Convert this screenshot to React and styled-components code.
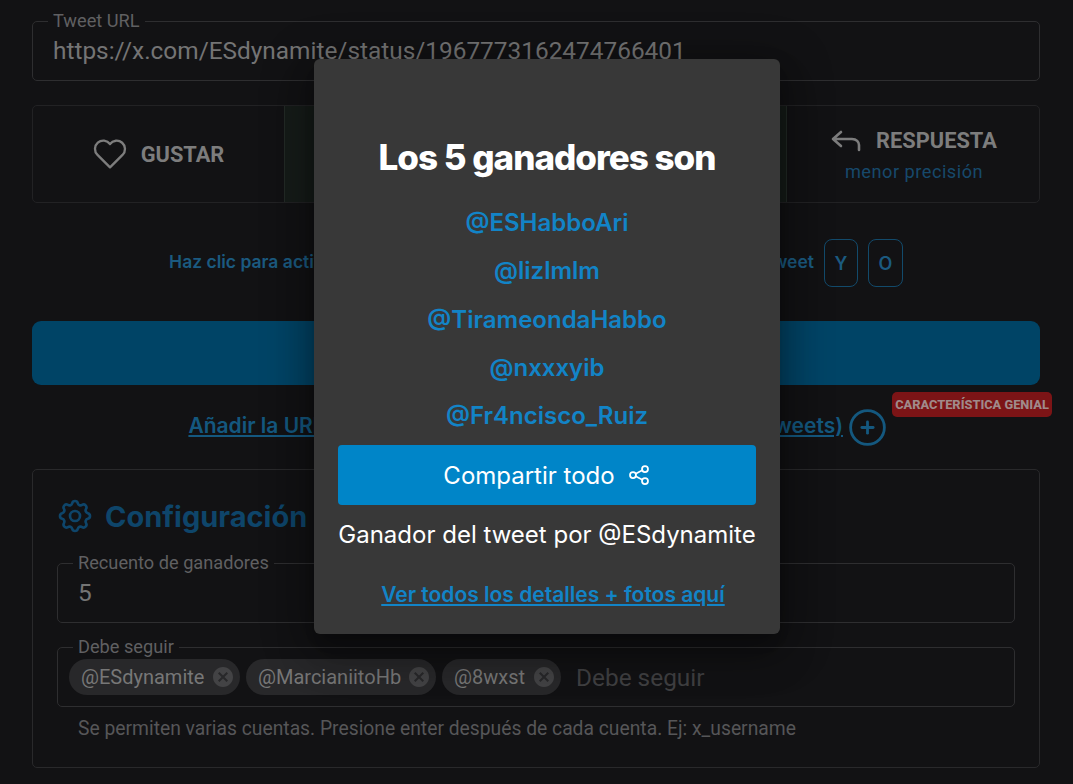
import React from 'react';
import styled, { createGlobalStyle } from 'styled-components';
import { TbHeart, TbSettings, TbCirclePlus, TbShare } from 'react-icons/tb';

const GlobalStyle = createGlobalStyle`
	html, body {
		margin: 0;
		height: 100%;
		background: #121214;
		overflow: hidden;
	}
	* {
		box-sizing: border-box;
	}
`;

const Page = styled.div`
	position: relative;
	width: 1073px;
	height: 784px;
	overflow: hidden;
	padding: 12px 33px 0 32px;
	font-family: Roboto, sans-serif;
	background: #121214;
`;

const Field = styled.fieldset`
	margin: 0;
	padding: 0 20px;
	height: 69px;
	border: 1px solid #2e2e30;
	border-radius: 5px;
`;

const Legend = styled.legend`
	padding: 0 5px;
	margin-left: -5px;
	font-size: 18.2px;
	line-height: 18px;
	color: #606062;
`;

const FieldValue = styled.div`
	font-size: 24.4px;
	line-height: 36px;
	margin-top: 3px;
	color: #747474;
`;

const Tabs = styled.div`
	display: flex;
	height: 98px;
	margin-top: 24px;
	border: 1px solid #222224;
	border-radius: 5px;
`;

const Tab = styled.div`
	display: flex;
	flex-direction: column;
	align-items: center;
	justify-content: center;
	width: ${(p) => p.$width}px;
	flex: ${(p) => (p.$grow ? 1 : 'none')};
	padding: ${(p) => p.$pad || '0'};
	background: ${(p) => (p.$active ? '#161c19' : 'transparent')};
	border-left: ${(p) => (p.$active ? '1px solid #232b26' : 'none')};
	border-right: ${(p) => (p.$active ? '1px solid #232b26' : 'none')};
`;

const TabLabel = styled.div`
	display: flex;
	align-items: center;
	gap: ${(p) => p.$gap}px;
	font-size: 21.8px;
	font-weight: 700;
	color: #7d7d7d;
	svg {
		color: #7d7d7d;
	}
`;

const TabNote = styled.div`
	margin-top: 8px;
	font-size: 18.2px;
	letter-spacing: 0.5px;
	color: #17496b;
`;

const HintRow = styled.div`
	display: flex;
	align-items: center;
	justify-content: flex-end;
	gap: 10px;
	height: 48px;
	margin-top: 36px;
	padding-right: 137px;
	font-family: Inter, sans-serif;
	font-size: 17.5px;
	font-weight: 600;
	color: #1b5a80;
	white-space: nowrap;
`;

const HintText = styled.span`
	margin-bottom: 3px;
`;

const Key = styled.span`
	display: flex;
	align-items: center;
	justify-content: center;
	width: ${(p) => p.$width}px;
	height: 48px;
	border: 1px solid #124a6b;
	border-radius: 8px;
	font-size: 18px;
	background: #121214;
`;

const PickButton = styled.div`
	height: 64px;
	margin-top: 34px;
	border-radius: 9px;
	background: #004466;
`;

const AddRow = styled.div`
	position: relative;
	display: flex;
	align-items: center;
	justify-content: flex-end;
	gap: 2px;
	height: 38px;
	margin-top: 23px;
	padding-right: 150px;
	font-family: Inter, sans-serif;
	font-size: 21px;
	font-weight: 600;
	color: #14587f;
	white-space: nowrap;
	svg {
		color: #14587f;
		flex: none;
	}
`;

const AddLink = styled.span`
	margin-bottom: 4px;
	text-decoration: underline;
`;

const Badge = styled.span`
	position: absolute;
	left: 860px;
	top: -16px;
	width: 160px;
	height: 25px;
	display: flex;
	align-items: center;
	justify-content: center;
	border-radius: 5px;
	background: #7c1416;
	font-family: Roboto, sans-serif;
	font-size: 12.8px;
	font-weight: 800;
	color: #a08a8a;
`;

const SettingsCard = styled.section`
	height: 299px;
	margin-top: 23px;
	padding: 24px 24px 0;
	border: 1px solid #29292b;
	border-radius: 5px;
`;

const CardTitle = styled.h2`
	display: flex;
	align-items: center;
	gap: 10px;
	margin: 0 0 16px;
	height: 44px;
	font-family: Inter, sans-serif;
	font-size: 29px;
	font-weight: 700;
	color: #0e456a;
	svg {
		margin-left: -2px;
		color: #0e456a;
	}
`;

const SettingField = styled(Field)`
	margin-bottom: 15px;
`;

const ChipRow = styled.div`
	display: flex;
	align-items: center;
	gap: 6px;
	margin: 3px 0 0 -9px;
`;

const Chip = styled.span`
	display: flex;
	align-items: center;
	justify-content: space-between;
	height: 36px;
	width: ${(p) => p.$width}px;
	padding: 0 5px 0 12px;
	border-radius: 18px;
	background: #28282a;
	font-size: 20px;
	color: #777;
`;

const ChipClose = styled.svg`
	width: 24px;
	height: 24px;
	fill: #434345;
`;

const Placeholder = styled.span`
	margin-left: 9px;
	font-size: 24.4px;
	color: #404042;
`;

const HelpText = styled.p`
	margin: -5px 0 0 21px;
	font-size: 19.3px;
	color: #565658;
`;

const Modal = styled.div`
	position: absolute;
	left: 314px;
	top: 59px;
	width: 466px;
	height: 575px;
	padding: 70px 24px 0;
	display: flex;
	flex-direction: column;
	align-items: center;
	border-radius: 6px;
	background: #383838;
	box-shadow: 0 11px 15px -7px rgba(0, 0, 0, 0.2), 0 24px 38px 3px rgba(0, 0, 0, 0.14), 0 9px 46px 8px rgba(0, 0, 0, 0.3);
	font-family: Inter, sans-serif;
	color: #fff;
`;

const ModalTitle = styled.h1`
	margin: 0 0 14px;
	font-size: 35px;
	line-height: 56px;
	font-weight: 800;
	letter-spacing: -1px;
	white-space: nowrap;
`;

const Winner = styled.div`
	height: 48.3px;
	line-height: 48px;
	font-size: 24px;
	font-weight: 600;
	color: #1284c7;
`;

const ShareButton = styled.div`
	display: flex;
	align-items: center;
	justify-content: center;
	gap: 12px;
	width: 100%;
	height: 60px;
	flex: none;
	margin-top: 5px;
	border-radius: 4px;
	background: #0085c8;
	font-size: 24px;
`;

const Credit = styled.div`
	margin-top: 14px;
	font-size: 24px;
	line-height: 32px;
	white-space: nowrap;
`;

const DetailsLink = styled.div`
	margin-top: 30px;
	padding-left: 12px;
	font-size: 21px;
	font-weight: 600;
	line-height: 28px;
	color: #1284c7;
	text-decoration: underline;
`;

const winners = ['@ESHabboAri', '@lizlmlm', '@TirameondaHabbo', '@nxxxyib', '@Fr4ncisco_Ruiz'];
const chips = [
	{ name: '@ESdynamite', width: 171 },
	{ name: '@MarcianiitoHb', width: 190 },
	{ name: '@8wxst', width: 119 },
];

const App = () => {
	return (
		<Page>
			<GlobalStyle />
			<Field>
				<Legend>Tweet URL</Legend>
				<FieldValue>https://x.com/ESdynamite/status/1967773162474766401</FieldValue>
			</Field>

			<Tabs>
				<Tab $width={251} $pad="0 3px 0 0">
					<TabLabel $gap={11}><TbHeart size={40} strokeWidth={1.4} />GUSTAR</TabLabel>
				</Tab>
				<Tab $grow $active />
				<Tab $width={252} $pad="2px 0 0 2px">
					<TabLabel $gap={15}>
						<svg width="30" height="22" viewBox="0 0 30 22" fill="none" stroke="currentColor" strokeWidth="2.6" strokeLinecap="round" strokeLinejoin="round">
							<path d="M10 2 L2 9 L10 16 M2 9 H21 C25.5 9 28 12 28 15 V20" />
						</svg>
						RESPUESTA
					</TabLabel>
					<TabNote>menor precisión</TabNote>
				</Tab>
			</Tabs>

			<HintRow>
				<HintText>Haz clic para activar palabras clave que deben estar en la respuesta al tweet</HintText>
				<Key $width={34}>Y</Key>
				<Key $width={35}>O</Key>
			</HintRow>

			<PickButton />

			<AddRow>
				<AddLink>Añadir la URL de otro tweet y combinar resultados (otros tweets)</AddLink>
				<TbCirclePlus size={45} strokeWidth={1.5} />
				<Badge>CARACTERÍSTICA GENIAL</Badge>
			</AddRow>

			<SettingsCard>
				<CardTitle><TbSettings size={40} strokeWidth={1.6} />Configuración</CardTitle>
				<SettingField>
					<Legend>Recuento de ganadores</Legend>
					<FieldValue>5</FieldValue>
				</SettingField>
				<SettingField>
					<Legend>Debe seguir</Legend>
					<ChipRow>
						{chips.map((chip) => (
							<Chip key={chip.name} $width={chip.width}>
								{chip.name}
								<ChipClose viewBox="0 0 24 24">
									<path d="M12 2C6.47 2 2 6.47 2 12s4.47 10 10 10 10-4.47 10-10S17.53 2 12 2zm5 13.59L15.59 17 12 13.41 8.41 17 7 15.59 10.59 12 7 8.41 8.41 7 12 10.59 15.59 7 17 8.41 13.41 12 17 15.59z" />
								</ChipClose>
							</Chip>
						))}
						<Placeholder>Debe seguir</Placeholder>
					</ChipRow>
				</SettingField>
				<HelpText>Se permiten varias cuentas. Presione enter después de cada cuenta. Ej: x_username</HelpText>
			</SettingsCard>

			<Modal>
				<ModalTitle>Los 5 ganadores son</ModalTitle>
				{winners.map((name) => (
					<Winner key={name}>{name}</Winner>
				))}
				<ShareButton>Compartir todo <TbShare size={24} strokeWidth={1.75} /></ShareButton>
				<Credit>Ganador del tweet por @ESdynamite</Credit>
				<DetailsLink>Ver todos los detalles + fotos aquí</DetailsLink>
			</Modal>
		</Page>
	);
};

export default App;
